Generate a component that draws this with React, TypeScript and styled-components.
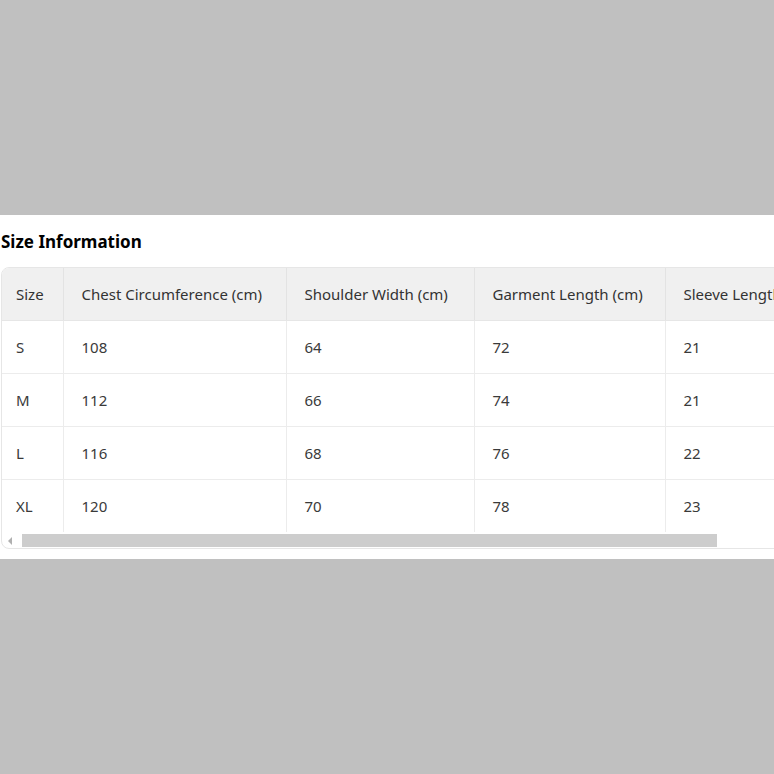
import React from "react";
import styled, { createGlobalStyle } from "styled-components";

const Global = createGlobalStyle`
  html, body { margin: 0; padding: 0; }
  body {
    background: #c0c0c0;
    font-family: "Noto Sans", "Open Sans", Arial, sans-serif;
    overflow: hidden;
  }
`;

const Page = styled.div`
  min-height: 100vh;
  display: flex;
  flex-direction: column;
  justify-content: center;
`;

const Panel = styled.section`
  background: #ffffff;
  padding: 15px 0 10px 1px;
  overflow: hidden;
`;

const Title = styled.h2`
  margin: 0 0 13px 0;
  font-size: 17px;
  line-height: 24px;
  font-weight: 700;
  color: #000;
`;

const TableBox = styled.div`
  width: 960px;
  border: 1px solid #e6e6e6;
  border-radius: 8px;
  overflow: hidden;
  display: flex;
  flex-direction: column;
`;

const Table = styled.table`
  border-collapse: collapse;
  table-layout: fixed;
  width: 958px;
  font-size: 15px;
  color: #333;
`;

const HeadCell = styled.th<{ $first?: boolean }>`
  height: 52px;
  padding: 0 0 0 ${(p) => (p.$first ? 14 : 18)}px;
  background: #f0f0f0;
  font-weight: 400;
  text-align: left;
  white-space: nowrap;
  color: #333;
  border-left: ${(p) => (p.$first ? "none" : "1px solid #e3e3e3")};
  border-bottom: 1px solid #e6e6e6;
`;

const Cell = styled.td<{ $first?: boolean; $last?: boolean }>`
  height: 52px;
  padding: 0 0 0 ${(p) => (p.$first ? 14 : 18)}px;
  white-space: nowrap;
  color: #3a3a3a;
  border-left: ${(p) => (p.$first ? "none" : "1px solid #ececec")};
  border-bottom: ${(p) => (p.$last ? "none" : "1px solid #ececec")};
`;

const ScrollBar = styled.div`
  height: 15px;
  display: flex;
  align-items: center;
  padding-top: 1px;
`;

const Arrow = styled.div`
  width: 16px;
  display: flex;
  justify-content: center;
  align-items: center;
  margin-right: 4px;
`;

const Thumb = styled.div`
  width: 695px;
  height: 13px;
  background: #cdcdcd;
`;

const cols = [61, 223, 188, 191, 295];
const headers = [
  "Size",
  "Chest Circumference (cm)",
  "Shoulder Width (cm)",
  "Garment Length (cm)",
  "Sleeve Length (cm)",
];
const rows = [
  ["S", "108", "64", "72", "21"],
  ["M", "112", "66", "74", "21"],
  ["L", "116", "68", "76", "22"],
  ["XL", "120", "70", "78", "23"],
];

export default function App() {
  return (
    <>
      <Global />
      <Page>
        <Panel>
          <Title>Size Information</Title>
          <TableBox>
            <Table>
              <colgroup>
                {cols.map((w, i) => (
                  <col key={i} style={{ width: w }} />
                ))}
              </colgroup>
              <thead>
                <tr>
                  {headers.map((h, i) => (
                    <HeadCell key={h} $first={i === 0}>
                      {h}
                    </HeadCell>
                  ))}
                </tr>
              </thead>
              <tbody>
                {rows.map((r, ri) => (
                  <tr key={ri}>
                    {r.map((c, ci) => (
                      <Cell key={ci} $first={ci === 0} $last={ri === rows.length - 1}>
                        {c}
                      </Cell>
                    ))}
                  </tr>
                ))}
              </tbody>
            </Table>
            <ScrollBar>
              <Arrow>
                <svg width="6" height="8" viewBox="0 0 6 8">
                  <path d="M5 0 L1 4 L5 8 Z" fill="#b0b0b0" />
                </svg>
              </Arrow>
              <Thumb />
            </ScrollBar>
          </TableBox>
        </Panel>
      </Page>
    </>
  );
}
